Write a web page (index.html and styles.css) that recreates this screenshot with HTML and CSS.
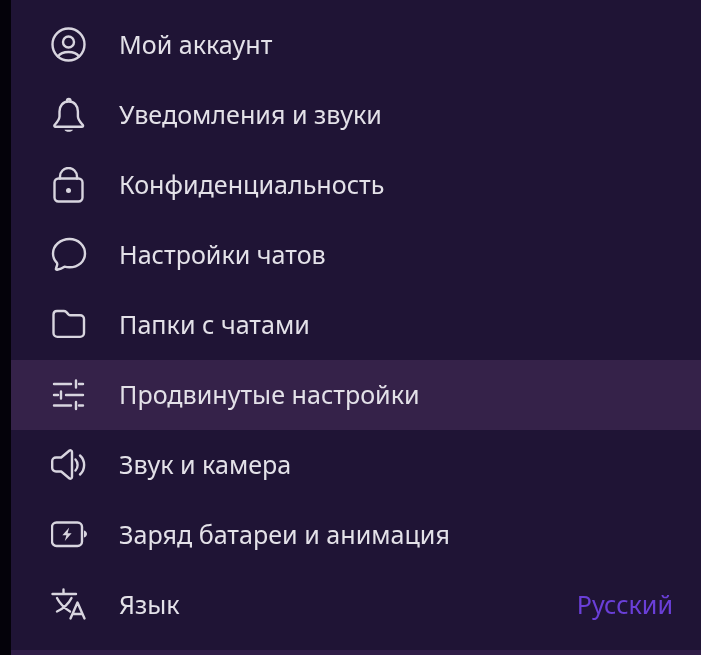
FILE: index.html
```html
<!DOCTYPE html>
<html lang="ru">
<head>
    <meta charset="UTF-8">
    <meta name="viewport" content="width=device-width, initial-scale=1.0">
    <title>Настройки</title>
    <link rel="stylesheet" href="styles.css">
</head>
<body>
    <div class="edge"></div>
    <div class="panel">
        <ul class="menu">
            <li class="item">
                <svg class="icon" viewBox="0 0 36 36"><circle cx="17.500" cy="17.500" r="16"/><circle cx="17.500" cy="15" r="5.500"/><path d="M7 29.500c2-3 6-4.500 10.500-4.500s8.500 1.500 10.500 4.500"/></svg>
                <span class="label">Мой аккаунт</span>
            </li>
            <li class="item">
                <svg class="icon" viewBox="0 0 36 36"><path d="M17.700 4.500c-5.700 0-9.200 4.300-9.200 10v5c0 3.200-2.300 5.500-4.800 8.300-.8.900-.3 2 .9 2h26.200c1.200 0 1.700-1.100.9-2-2.500-2.800-4.800-5.100-4.800-8.300v-5c0-5.700-3.500-10-9.200-10z"/><path d="M16 4c0-2.600 3.500-2.600 3.500 0"/><path class="dot" d="M13.500 32.800h8.400c-.9 2.700-7.500 2.700-8.400 0z"/></svg>
                <span class="label">Уведомления и звуки</span>
            </li>
            <li class="item">
                <svg class="icon" viewBox="0 0 36 36"><rect x="3.500" y="11.500" width="28" height="23" rx="4"/><path d="M9 11.500V9.500a8.500 8.500 0 0 1 17 0v2"/><circle class="dot" cx="17.500" cy="23.500" r="2.500"/></svg>
                <span class="label">Конфиденциальность</span>
            </li>
            <li class="item">
                <svg class="icon" viewBox="0 0 36 36"><path d="M18.500 2C9.500 2 2 8.500 2 16.500c0 3.800 1.500 6.700 3.500 8.800.8 1 1 2 .5 3.200l-1 3c-.3.800.3 1.300 1.100 1.200 3-.6 5.400-1.700 7.400-3 1.500.4 3.200.6 5 .6 9 0 15.500-6 15.500-13.800S27.500 2 18.500 2z"/></svg>
                <span class="label">Настройки чатов</span>
            </li>
            <li class="item">
                <svg class="icon" viewBox="0 0 36 36"><path d="M2.500 7.500c0-2 1.500-3.500 3.500-3.500h6.800c1 0 1.900.4 2.600 1.100l2 2.300c.6.600 1.300.9 2.100.9h9.600c2.200 0 3.900 1.600 3.900 3.800V26c0 2.200-1.700 3.900-3.900 3.900H6.400c-2.200 0-3.900-1.700-3.900-3.900z"/></svg>
                <span class="label">Папки с чатами</span>
            </li>
            <li class="item active">
                <svg class="icon" viewBox="0 0 36 36"><path d="M3 7h17M28 7h4M25 3.500v7M3 18h4M15 18h17M10 14.500v7M3 28.500h17M28 28.500h4M25 25v7"/></svg>
                <span class="label">Продвинутые настройки</span>
            </li>
            <li class="item">
                <svg class="icon" viewBox="0 0 36 36"><path d="M18.500 3.500c1-.6 2.500 0 2.500 1.500v25c0 1.500-1.500 2.100-2.500 1.500l-8.300-7H5c-2.200 0-3.800-1.600-3.800-3.500v-7c0-1.900 1.600-3.500 3.800-3.500h5.200z"/><path d="M24.500 12.500c2.800 3 2.800 8 0 11"/><path d="M29 8.500c5.500 5 5.500 14 0 19"/></svg>
                <span class="label">Звук и камера</span>
            </li>
            <li class="item">
                <svg class="icon" viewBox="0 0 36 36"><rect x="1" y="5.500" width="30" height="23.500" rx="4.500"/><path class="dot" d="M18.200 10.500l-6.800 7.700h4l-1.600 5.800 6.800-7.700h-4zM33 13.500c2 .6 3 2 3 3.500s-1 2.900-3 3.500z"/></svg>
                <span class="label">Заряд батареи и анимация</span>
            </li>
            <li class="item">
                <svg class="icon" viewBox="0 0 36 36"><path d="M1.500 7h23.500M12.500 2.500V7M6 11c2.500 5 6.500 9.500 13 13.500M20.500 11c-2.500 5-7 10-14.500 13.500M19.500 31.500l7-16 7 16M21.800 27h9.400"/></svg>
                <span class="label">Язык</span>
                <span class="value">Русский</span>
            </li>
        </ul>
        <div class="next-section"></div>
    </div>
</body>
</html>
```

FILE: styles.css
```css
html, body {
    height: 100%;
}

body {
    margin: 0;
    display: flex;
    overflow: hidden;
    background: #1f1435;
    font-family: "Noto Sans", "Open Sans", sans-serif;
    color: #e3e1e8;
}

.edge {
    width: 11px;
    flex-shrink: 0;
    background: #04020a;
}

.panel {
    flex: 1;
    display: flex;
    flex-direction: column;
    padding-top: 10px;
}

.menu {
    list-style: none;
    margin: 0;
    padding: 0;
    filter: blur(0.4px);
}

.item {
    height: 70px;
    display: flex;
    align-items: center;
    gap: 32px;
    padding: 0 28px 0 40px;
    font-size: 25.100px;
}

.item.active {
    background: #352249;
}

.label,
.value {
    padding-bottom: 2px;
}

.icon {
    width: 36px;
    height: 36px;
    flex-shrink: 0;
    fill: none;
    stroke: #d8d5df;
    stroke-width: 2.400;
    stroke-linecap: round;
    stroke-linejoin: round;
}

.icon .dot {
    fill: #d8d5df;
    stroke: none;
}

.value {
    margin-left: auto;
    color: #6a3fd8;
}

.next-section {
    height: 5px;
    margin-top: 10px;
    background: #2f1d47;
}
```
